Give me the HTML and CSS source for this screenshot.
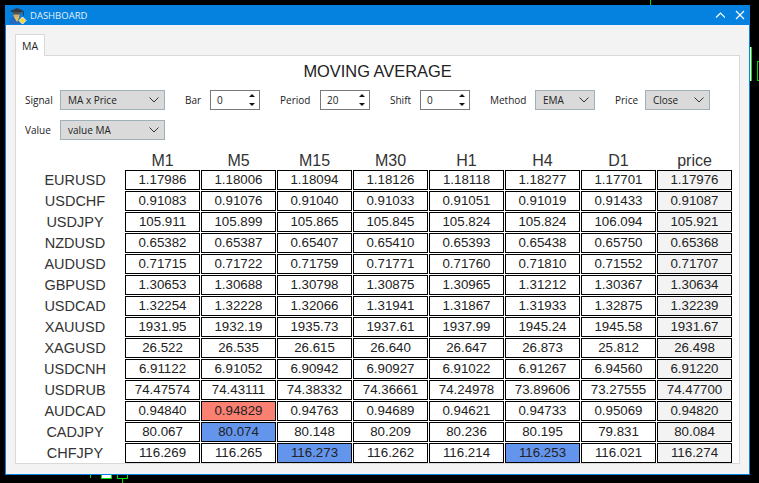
FILE: index.html
```html
<!DOCTYPE html>
<html lang="en">
<head>
  <meta charset="UTF-8">
  <title>Dashboard</title>
  <link rel="stylesheet" href="styles.css">
</head>
<body>
<div class="mark mark-top"></div>
<div class="mark mark-right-a"></div>
<div class="mark mark-right-b"></div>
<div class="mark mark-bottom-a"></div>
<div class="mark mark-bottom-b"></div>
<div class="mark mark-bottom-c"></div>
<div class="mark mark-bottom-d"></div>

<div class="window">
  <div class="titlebar">
    <svg class="appicon" width="18" height="18" viewBox="0 0 18 18">
      <path d="M1 17c-.5-5 1.500-7.500 4-7.500h5c2.500 0 3.500 3 3.500 7.500z" fill="#2468c0"/>
      <path d="M5 10l3 5 2.500-5z" fill="#e6c654"/>
      <circle cx="7.500" cy="7.500" r="3.200" fill="#d9ae6c"/>
      <path d="M1 4L8 1l7 3-7 3z" fill="#343a40"/>
      <path d="M4 5h7.500v2.500H4z" fill="#4c5359"/>
      <path d="M14.500 4.500v4" stroke="#343a40" fill="none"/>
      <path d="M13.500 10l3.500 3.500-3.500 3.500-3.500-3.500z" fill="#f2d43c" stroke="#fff8d0"/>
    </svg>
    <span class="title">DASHBOARD</span>
    <svg class="winbtn" width="12" height="12" viewBox="0 0 12 12"><path d="M3 8.500L7.500 4 12 8.500" fill="none" stroke="#fff" stroke-width="1.200"/></svg>
    <svg class="winbtn" width="12" height="12" viewBox="0 0 12 12"><path d="M3 2l8 8M11 2l-8 8" fill="none" stroke="#fff" stroke-width="1.200"/></svg>
  </div>

  <div class="body">
    <div class="tabs"><div class="tab">MA</div></div>
    <div class="pane">
      <h1 class="heading">MOVING AVERAGE</h1>

      <div class="controls">
        <div class="field">
          <label class="lbl w35">Signal</label>
          <div class="select w105">MA x Price<svg class="chev" width="10" height="6" viewBox="0 0 10 6"><path d="M.5.500L5 5 9.500.500" fill="none" stroke="#333"/></svg></div>
        </div>
        <div class="field">
          <label class="lbl w25">Bar</label>
          <div class="spin">0<span class="arrows"><i class="up"></i><i class="down"></i></span></div>
        </div>
        <div class="field">
          <label class="lbl w40">Period</label>
          <div class="spin">20<span class="arrows"><i class="up"></i><i class="down"></i></span></div>
        </div>
        <div class="field">
          <label class="lbl w30">Shift</label>
          <div class="spin">0<span class="arrows"><i class="up"></i><i class="down"></i></span></div>
        </div>
        <div class="field">
          <label class="lbl w45">Method</label>
          <div class="select w60">EMA<svg class="chev" width="10" height="6" viewBox="0 0 10 6"><path d="M.5.500L5 5 9.500.500" fill="none" stroke="#333"/></svg></div>
        </div>
        <div class="field">
          <label class="lbl w30">Price</label>
          <div class="select w65">Close<svg class="chev" width="10" height="6" viewBox="0 0 10 6"><path d="M.5.500L5 5 9.500.500" fill="none" stroke="#333"/></svg></div>
        </div>
      </div>
      <div class="controls">
        <div class="field">
          <label class="lbl w35">Value</label>
          <div class="select w105">value MA<svg class="chev" width="10" height="6" viewBox="0 0 10 6"><path d="M.5.500L5 5 9.500.500" fill="none" stroke="#333"/></svg></div>
        </div>
      </div>

      <div class="grid" id="grid"></div>
    </div>
  </div>
</div>

<script>
  const cols = ["M1", "M5", "M15", "M30", "H1", "H4", "D1", "price"];
  const rows = [
    ["EURUSD", "1.17986", "1.18006", "1.18094", "1.18126", "1.18118", "1.18277", "1.17701", "1.17976"],
    ["USDCHF", "0.91083", "0.91076", "0.91040", "0.91033", "0.91051", "0.91019", "0.91433", "0.91087"],
    ["USDJPY", "105.911", "105.899", "105.865", "105.845", "105.824", "105.824", "106.094", "105.921"],
    ["NZDUSD", "0.65382", "0.65387", "0.65407", "0.65410", "0.65393", "0.65438", "0.65750", "0.65368"],
    ["AUDUSD", "0.71715", "0.71722", "0.71759", "0.71771", "0.71760", "0.71810", "0.71552", "0.71707"],
    ["GBPUSD", "1.30653", "1.30688", "1.30798", "1.30875", "1.30965", "1.31212", "1.30367", "1.30634"],
    ["USDCAD", "1.32254", "1.32228", "1.32066", "1.31941", "1.31867", "1.31933", "1.32875", "1.32239"],
    ["XAUUSD", "1931.95", "1932.19", "1935.73", "1937.61", "1937.99", "1945.24", "1945.58", "1931.67"],
    ["XAGUSD", "26.522", "26.535", "26.615", "26.640", "26.647", "26.873", "25.812", "26.498"],
    ["USDCNH", "6.91122", "6.91052", "6.90942", "6.90927", "6.91022", "6.91267", "6.94560", "6.91220"],
    ["USDRUB", "74.47574", "74.43111", "74.38332", "74.36661", "74.24978", "73.89606", "73.27555", "74.47700"],
    ["AUDCAD", "0.94840", "0.94829", "0.94763", "0.94689", "0.94621", "0.94733", "0.95069", "0.94820"],
    ["CADJPY", "80.067", "80.074", "80.148", "80.209", "80.236", "80.195", "79.831", "80.084"],
    ["CHFJPY", "116.269", "116.265", "116.273", "116.262", "116.214", "116.253", "116.021", "116.274"]
  ];
  // cells that hold a signal: "row,col"
  const marks = { "11,2": "sell", "12,2": "buy", "13,3": "buy", "13,6": "buy" };

  let html = '<div></div>';
  cols.forEach(c => { html += `<div class="colhead">${c}</div>`; });
  rows.forEach((r, i) => {
    html += `<div class="rowhead">${r[0]}</div>`;
    for (let j = 1; j < r.length; j++) {
      let cls = "cell";
      if (j === 8) cls += " last";
      if (marks[i + "," + j]) cls += " " + marks[i + "," + j];
      html += `<div class="${cls}">${r[j]}</div>`;
    }
  });
  document.getElementById("grid").innerHTML = html;
</script>
</body>
</html>
```
FILE: styles.css
```css
html, body {
  margin: 0;
  height: 100%;
  background: #000;
  overflow: hidden;
}
body {
  font-family: "Open Sans", "Noto Sans", sans-serif;
  font-size: 10px;
  color: #222;
}

/* bits of the chart behind the window */
.mark {
  position: absolute;
  box-sizing: border-box;
}
.mark-top { left: 650px; top: 0; width: 1px; height: 5px; background: #00e000; }
.mark-right-a { left: 750px; top: 47px; width: 2px; height: 34px; background: #fff; border-right: 1px solid #00e000; }
.mark-right-b { left: 757px; top: 61px; width: 2px; height: 20px; border: 1px solid #00e000; border-right: 0; }
.mark-bottom-a { left: 90px; top: 475px; width: 1px; height: 3px; background: #00e000; }
.mark-bottom-b { left: 101px; top: 475px; width: 11px; height: 4px; background: #fff; border: 1px solid #00e000; border-top: 0; }
.mark-bottom-c { left: 117px; top: 475px; width: 11px; height: 4px; border: 1px solid #00e000; border-top: 0; }
.mark-bottom-d { left: 122px; top: 479px; width: 1px; height: 4px; background: #00e000; }

.window {
  box-sizing: border-box;
  margin: 5px 0 0 5px;
  width: 745px;
  height: 470px;
  background: #f3f3f3;
  border: 1px solid #0581e0;
  border-top: 0;
  display: flex;
  flex-direction: column;
}
.titlebar {
  height: 20px;
  flex: none;
  background: #0581e0;
  color: #e4f1fb;
  display: flex;
  align-items: center;
  padding: 0 5px 0 4px;
  margin: 0 -1px;
}
.appicon { margin-right: 3px; margin-top: 1px; }
.title { flex: 1; font-size: 9.500px; }
.winbtn { margin-left: 8px; }

.body {
  flex: 1;
  padding: 9px 9px 10px;
  display: flex;
  flex-direction: column;
}
.tabs {
  height: 21px;
  display: flex;
  flex: none;
}
.tab {
  box-sizing: border-box;
  width: 30px;
  height: 22px;
  background: #fff;
  border: 1px solid #d9d9d9;
  border-bottom: 0;
  text-align: center;
  line-height: 22px;
  font-size: 10.500px;
  position: relative;
  z-index: 1;
}
.pane {
  flex: 1;
  background: #fff;
  border: 1px solid #d9d9d9;
  padding: 0 9px;
}
.heading {
  margin: 4px 0 0;
  height: 26px;
  text-align: center;
  font: normal 16.400px/23px "Liberation Sans", sans-serif;
  color: #222;
}
.controls {
  display: flex;
  gap: 20px;
  height: 20px;
  margin: 4px 0 10px;
}
.controls + .controls { margin: 0 0 11px; }
.field { display: flex; align-items: center; }
.lbl { display: block; }
.w25 { width: 25px; }
.w30 { width: 30px; }
.w35 { width: 35px; }
.w40 { width: 40px; }
.w45 { width: 45px; }
.w60 { width: 60px; }
.w65 { width: 65px; }
.w105 { width: 105px; }

.select {
  box-sizing: border-box;
  height: 20px;
  background: #dadada;
  border: 1px solid #9eb0b8;
  padding-left: 7px;
  line-height: 19px;
  position: relative;
}
.chev { position: absolute; right: 5px; top: 6px; }
.spin {
  box-sizing: border-box;
  width: 50px;
  height: 20px;
  background: #fff;
  border: 1px solid #7a7a7a;
  padding-left: 6px;
  line-height: 19px;
  position: relative;
}
.arrows {
  position: absolute;
  right: 4px;
  top: 3px;
  display: flex;
  flex-direction: column;
  gap: 6px;
}
.arrows i { display: block; width: 0; height: 0; border: 3px solid transparent; }
.arrows .up { border-top: 0; border-bottom: 3px solid #111; }
.arrows .down { border-bottom: 0; border-top: 3px solid #111; }

.grid {
  display: grid;
  grid-template-columns: 99px repeat(8, 75px);
  grid-template-rows: 18px repeat(14, 20px);
  gap: 1px;
}
.colhead, .rowhead {
  font: 16px/19px "Liberation Sans", sans-serif;
  color: #333;
  text-align: center;
}
.rowhead { line-height: 20px; font-size: 14.500px; padding-left: 1px; }
.cell {
  box-sizing: border-box;
  background: #fff;
  border: 1px solid #000;
  text-align: center;
  font: 13.300px/18px "Liberation Sans", sans-serif;
  color: #222;
}
.cell.last { background: #f3f3f3; }
.cell.sell { background: #fa8072; }
.cell.buy { background: #6495ed; }
```
